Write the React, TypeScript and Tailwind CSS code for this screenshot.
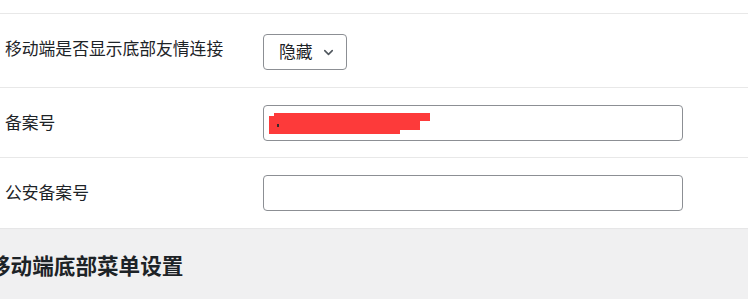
import { ChevronDown } from "lucide-react";

const font = { fontFamily: '"Noto Sans CJK SC", "Noto Sans", sans-serif' };

function TextBox({ redacted }: { redacted?: boolean }) {
  return (
    <div className="relative h-[36px] w-[420px] rounded-[4px] border border-[#8c8f94] bg-white">
      {redacted && (
        <>
          {/* 打码遮挡 */}
          <div className="absolute left-[10px] top-[7px] h-[8px] w-[156px] bg-[#fd3a3a]" />
          <div className="absolute left-[5px] top-[10px] h-[14px] w-[151px] bg-[#fd3a3a]" />
          <div className="absolute left-[5px] top-[20px] h-[8px] w-[131px] bg-[#fd3a3a]" />
          <div className="absolute left-[13px] top-[18px] h-[3px] w-[2px] bg-[#3a2a2a]" />
        </>
      )}
    </div>
  );
}

export default function App() {
  return (
    <div className="h-[299px] w-[748px] overflow-hidden bg-[#f0f0f1] text-[#1d2327]" style={font}>
      <div className="bg-white pt-[13px] shadow-[0_1px_1px_rgba(0,0,0,0.04)]">
        <div className="flex h-[74px] border-t border-[#e8e8e8]">
          <div className="w-[263px] pl-[5px] pt-[23px] text-[16.8px] leading-[1.4]">
            移动端是否显示底部友情连接
          </div>
          <div className="pt-[20px]">
            <div className="flex h-[36px] w-[84px] items-center justify-between rounded-[4px] border border-[#8c8f94] pl-[15px] pr-[10px] text-[16.8px]">
              <span>隐藏</span>
              <ChevronDown size={15} strokeWidth={2.5} className="text-[#50575e]" />
            </div>
          </div>
        </div>
        <div className="flex h-[70px] items-center border-t border-[#e8e8e8]">
          <div className="w-[263px] pl-[5px] text-[16.8px] leading-[1.4]">备案号</div>
          <TextBox redacted />
        </div>
        <div className="flex h-[71px] items-center border-t border-[#e8e8e8]">
          <div className="w-[263px] pl-[5px] text-[16.8px] leading-[1.4]">公安备案号</div>
          <TextBox />
        </div>
      </div>
      <h2 className="ml-[-11px] mt-[22px] text-[21.6px] font-bold leading-[1.4]">移动端底部菜单设置</h2>
    </div>
  );
}
